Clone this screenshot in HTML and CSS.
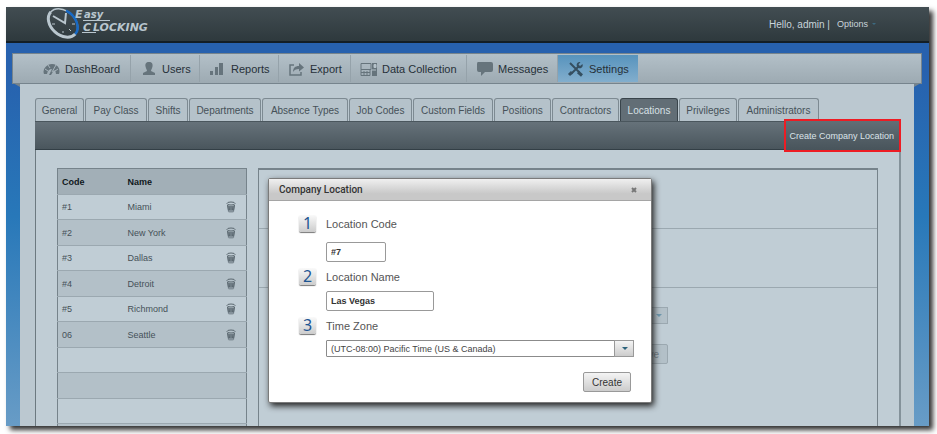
FILE: index.html
```html
<!DOCTYPE html>
<html lang="en">
<head>
    <meta charset="UTF-8">
    <meta name="viewport" content="width=device-width, initial-scale=1.0">
    <title>Easy Clocking - Locations</title>
    <link rel="stylesheet" href="styles.css">
</head>
<body>
    <div class="window">
        <header class="topbar">
            <svg class="logo" width="110" height="34" viewBox="0 0 110 34" role="img" aria-label="Easy Clocking">
                <g transform="rotate(42 16 16)" fill="none">
                    <ellipse cx="16" cy="16" rx="16.500" ry="12" stroke="#b9c6ce" stroke-width="1.500"/>
                    <path d="M-.5 16A16.500 12 0 0 0 32.500 16" stroke="#b9c6ce" stroke-width="3"/>
                    <path d="M10 4.800A16.500 12 0 0 1 32.500 16" stroke="#1769c4" stroke-width="2.500"/>
                </g>
                <path d="M6 9l12 7 1-10" fill="none" stroke="#b9c6ce" stroke-width="2"/>
                <path d="M5 17h3M25 17h3M16 26v-2M24 24l-2-2" stroke="#b9c6ce"/>
                <text class="logo-big" x="28" y="11">E</text>
                <text class="logo-small" x="37" y="11">asy</text>
                <text class="logo-big" x="36" y="24">C</text>
                <text class="logo-big" x="46" y="24">LOCKING</text>
                <path d="M36 13.500h27M35 25.500h14" stroke="#b9c6ce"/>
            </svg>
            <div class="account">
                <span class="hello">Hello, admin |</span>
                <button class="options" type="button">Options <i class="caret"></i></button>
            </div>
        </header>

        <nav class="mainnav">
            <a href="#dashboard">
                <svg width="17" height="16" viewBox="0 0 17 16"><path d="M1 13Q-.5 9 2.500 6 5 3 9 3q5 0 7 4.500 1 3 0 5.500h-3q0-3-2-4l-3 5H6l3-6q-4 0-5 5z" fill="#66747c"/><path d="M2 8l3 2M5 4l2 3M13 4l-4 7M15 8l-3 2" stroke="#a8b5bd"/></svg>
                DashBoard
            </a>
            <a href="#users">
                <svg width="17" height="16" viewBox="0 0 17 16"><path d="M9 1c3 0 4 2 3.500 4.500C12 8 11 8.500 11 10l4 2v2H3v-2l4-2c0-1.500-1-2-1.500-4.500C5 3 6 1 9 1z" fill="#66747c"/></svg>
                Users
            </a>
            <a href="#reports">
                <svg width="17" height="16" viewBox="0 0 17 16"><path d="M1 10h3v4H1zM6 6h3v8H6zM10 2h4v12h-4z" fill="#66747c"/></svg>
                Reports
            </a>
            <a href="#export">
                <svg width="17" height="16" viewBox="0 0 17 16"><path d="M6 4H2v10h11v-3" fill="none" stroke="#66747c" stroke-width="1.500"/><path d="M5 11c0-4 2-6 6-6V2l5 4.500-5 4V8c-3 0-5 1-6 3z" fill="#66747c"/></svg>
                Export
            </a>
            <a href="#data">
                <svg width="17" height="16" viewBox="0 0 17 16"><path d="M1 2.500h10v6H1zM1 8.500v6h9v-6M4 10v4M7 10v4M1 11.500h9" fill="none" stroke="#66747c"/><path d="M12 2h5v13h-5z" fill="#66747c"/><path d="M14 3.500h2v3h-2zM12 9h4" fill="#b5c2ca" stroke="#b5c2ca"/></svg>
                Data Collection
            </a>
            <a href="#messages">
                <svg width="17" height="16" viewBox="0 0 17 16"><path d="M2 1h13q2 0 2 2v6q0 2-2 2H9l-4 4v-4H3q-2 0-2-2V3q0-2 1-2z" fill="#66747c"/></svg>
                Messages
            </a>
            <a href="#settings" class="current">
                <svg width="17" height="16" viewBox="0 0 17 16"><path d="M3 2l9.500 9.500M11.500 5.500L4 13" stroke="#354f61" stroke-width="2"/><path d="M11 11l4 3.500" stroke="#354f61" stroke-width="3"/><path d="M15.500 3l-2.500 2-1.500-1.500 2-2.500c-3-.5-4.500 2-3.500 4.500l1.500 1.500c2.500 1 5-1 4-4z" fill="#354f61"/><path d="M5 11l-3 3" stroke="#354f61" stroke-width="3"/></svg>
                Settings
            </a>
        </nav>

        <main class="page">
            <nav class="tabs">
                <a href="#general">General</a>
                <a href="#payclass">Pay Class</a>
                <a href="#shifts">Shifts</a>
                <a href="#departments">Departments</a>
                <a href="#absence">Absence Types</a>
                <a href="#jobcodes">Job Codes</a>
                <a href="#fields">Custom Fields</a>
                <a href="#positions">Positions</a>
                <a href="#contractors">Contractors</a>
                <a href="#locations" class="current">Locations</a>
                <a href="#privileges">Privileges</a>
                <a href="#admins">Administrators</a>
            </nav>

            <div class="toolbar">
                <button class="create-location" type="button">Create Company Location</button>
            </div>

            <div class="workspace">
                <table class="locations">
                    <thead>
                        <tr><th class="code">Code</th><th>Name</th><th class="action"></th></tr>
                    </thead>
                    <tbody>
                        <tr><td>#1</td><td>Miami</td><td><button class="trash" type="button" aria-label="Delete Miami"><svg width="10" height="12"><use href="#trash"/></svg></button></td></tr>
                        <tr><td>#2</td><td>New York</td><td><button class="trash" type="button" aria-label="Delete New York"><svg width="10" height="12"><use href="#trash"/></svg></button></td></tr>
                        <tr><td>#3</td><td>Dallas</td><td><button class="trash" type="button" aria-label="Delete Dallas"><svg width="10" height="12"><use href="#trash"/></svg></button></td></tr>
                        <tr><td>#4</td><td>Detroit</td><td><button class="trash" type="button" aria-label="Delete Detroit"><svg width="10" height="12"><use href="#trash"/></svg></button></td></tr>
                        <tr><td>#5</td><td>Richmond</td><td><button class="trash" type="button" aria-label="Delete Richmond"><svg width="10" height="12"><use href="#trash"/></svg></button></td></tr>
                        <tr><td>06</td><td>Seattle</td><td><button class="trash" type="button" aria-label="Delete Seattle"><svg width="10" height="12"><use href="#trash"/></svg></button></td></tr>
                        <tr><td></td><td></td><td></td></tr>
                        <tr><td></td><td></td><td></td></tr>
                        <tr><td></td><td></td><td></td></tr>
                        <tr><td></td><td></td><td></td></tr>
                    </tbody>
                </table>

                <div class="details">
                    <div class="section"></div>
                    <div class="section"></div>
                    <form class="edit">
                        <div class="select">
                            <select aria-label="Zone" disabled><option></option></select>
                        </div>
                        <button class="btn" type="button" disabled>Save</button>
                    </form>

                    <section class="dialog" role="dialog" aria-labelledby="dialogTitle">
                        <div class="dialog-head">
                            <h2 id="dialogTitle">Company Location</h2>
                            <button class="close" type="button" aria-label="Close">
                                <svg width="6" height="6" viewBox="0 0 6 6"><path d="M1 1l4 4M5 1L1 5" stroke="#777" stroke-width="2"/></svg>
                            </button>
                        </div>
                        <form class="dialog-body">
                            <div class="field">
                                <span class="step">1</span>
                                <label for="code">Location Code</label>
                                <input class="short" type="text" id="code" value="#7">
                            </div>
                            <div class="field">
                                <span class="step">2</span>
                                <label for="name">Location Name</label>
                                <input type="text" id="name" value="Las Vegas">
                            </div>
                            <div class="field">
                                <span class="step">3</span>
                                <label for="zone">Time Zone</label>
                                <div class="select">
                                    <select id="zone"><option>(UTC-08:00) Pacific Time (US &amp; Canada)</option></select>
                                </div>
                            </div>
                            <button class="btn" type="submit">Create</button>
                        </form>
                    </section>
                </div>
            </div>
        </main>
    </div>

    <svg width="0" height="0" class="defs">
        <symbol id="trash" viewBox="0 0 10 12">
            <ellipse cx="5" cy="2.500" rx="4" ry="1.500" fill="none" stroke="#5b6870"/>
            <path d="M1 4l1 7q3 1 6 0l1-7q-4 1.500-8 0z" fill="#84919a"/>
            <path d="M3 5l.5 4M5 5v4M7 5l-.5 4M1.500 4l1 5.500M8.500 4l-1 5.500" stroke="#5b6870"/>
        </symbol>
    </svg>
</body>
</html>
```
FILE: styles.css
```css
* {
    box-sizing: border-box;
}

body {
    font-family: "Liberation Sans", Arial, sans-serif;
    font-size: 9px;
    margin: 0;
    padding: 7px 8px 8px 6px;
    background-color: #fff;
    display: flex;
    height: 100vh;
}

button, input, select {
    font-family: inherit;
    font-size: 9px;
}

button {
    cursor: pointer;
}

a {
    text-decoration: none;
}

.defs {
    position: absolute;
}

.window {
    flex: 1;
    display: flex;
    flex-direction: column;
    overflow: hidden;
    background: linear-gradient(#2761ae, #2761ae 15%, #2878b9 50%, #689cc6);
    box-shadow: 4px 4px 5px #333;
}

/* Top bar */
.topbar {
    display: flex;
    justify-content: space-between;
    align-items: center;
    flex-shrink: 0;
    height: 36px;
    padding: 0 53px 0 41px;
    background: linear-gradient(#424d52, #2e393d);
    border-bottom: 2px solid #131e26;
}

.logo {
    overflow: visible;
}

.logo text {
    fill: #b9c6ce;
    font-family: "DejaVu Sans", sans-serif;
    font-style: italic;
    font-weight: bold;
}

.logo-big {
    font-size: 11px;
}

.logo-small {
    font-size: 10px;
}

.account {
    display: flex;
    align-items: center;
    gap: 7px;
}

.hello {
    color: #c9d4da;
    font-size: 10px;
}

.options {
    display: flex;
    align-items: center;
    gap: 4px;
    padding: 0;
    border: none;
    background: none;
    color: #c9d4da;
}

.caret {
    border: 2px solid transparent;
    border-top-color: #3c6a80;
    border-bottom: none;
}

/* Main navigation */
.mainnav {
    position: relative;
    display: grid;
    grid-template-columns: 97px 69px 79px 72px 116px 91px 80px;
    flex-shrink: 0;
    height: 31px;
    margin: 10px 7px 0 6px;
    padding: 1px 21px;
    background: linear-gradient(#b3c0c8, #9daab2);
    border: 1px solid #76848d;
}

.mainnav a {
    display: flex;
    align-items: center;
    gap: 5px;
    padding-left: 9px;
    border-right: 1px solid #95a2aa;
    color: #263038;
    font-size: 11px;
    white-space: nowrap;
}

.mainnav .current {
    background: linear-gradient(#5793bd, #82aecd);
    border: none;
}

/* folded ribbon corners */
.mainnav::before, .mainnav::after {
    content: "";
    position: absolute;
    top: 100%;
    left: 0;
    border-top: 4px solid #76848d;
    border-left: 7px solid transparent;
}

.mainnav::after {
    left: auto;
    right: 0;
    border-left: none;
    border-right: 7px solid transparent;
}

/* Page */
.page {
    flex: 1;
    display: flex;
    flex-direction: column;
    min-height: 0;
    margin: 0 15px 0 14px;
    padding: 14px 13px 0 15px;
    background-color: #bbc8d0;
}

.tabs {
    display: grid;
    grid-template-columns: 49px 62px 40px 72px 86px 63px 80px 57px 67px 58px 58px 81px;
    gap: 1px;
    flex-shrink: 0;
    height: 23px;
}

.tabs a {
    display: flex;
    justify-content: center;
    align-items: center;
    background-color: #b5c2ca;
    border: 1px solid #7d8a92;
    border-bottom: none;
    border-radius: 3px 3px 0 0;
    color: #465158;
    font-size: 10px;
    white-space: nowrap;
}

.tabs .current {
    background-color: #626e76;
    border-color: #39444b;
    color: #d7e0e5;
}

.toolbar {
    display: flex;
    justify-content: flex-end;
    flex-shrink: 0;
    height: 29px;
    padding-right: 2px;
    background: linear-gradient(#66727a, #4a565d);
    border-top: 1px solid #4a565d;
    border-bottom: 1px solid #333f46;
}

.create-location {
    position: relative;
    margin: -1px 0;
    padding: 0 5px 0 3px;
    border: none;
    outline: 2px solid #ed1c24;
    background: linear-gradient(#626e76, #48545b);
    color: #dbe4e9;
    white-space: nowrap;
}

.workspace {
    flex: 1;
    display: flex;
    align-items: flex-start;
    gap: 11px;
    min-height: 0;
    padding: 18px 21px 0;
    background-color: #c0cdd5;
    border-left: 1px solid #6c7980;
    border-right: 2px solid #84929a;
}

/* Locations list */
.locations {
    width: 190px;
    flex-shrink: 0;
    table-layout: fixed;
    border-collapse: collapse;
    border: 1px solid #76838b;
    color: #465158;
}

.locations tr {
    height: 26px;
    border-bottom: 1px solid #9ba8b0;
}

.locations tbody tr:nth-child(odd) {
    height: 25px;
}

.locations tbody tr:nth-child(even) {
    background-color: #b3c0c8;
}

.locations thead {
    background-color: #a2afb7;
    color: #10181d;
}

.locations th, .locations td {
    padding: 0 4px;
    text-align: left;
}

.locations .code {
    width: 66px;
}

.locations .action {
    width: 25px;
}

.trash {
    display: block;
    padding: 0;
    border: none;
    background: none;
}

.trash svg {
    display: block;
}

/* Location details */
.details {
    position: relative;
    flex: 1;
    align-self: stretch;
    border: 1px solid #76838b;
    border-top-width: 2px;
    border-bottom: none;
}

.section {
    height: 59px;
    border-bottom: 1px solid #9ba8b0;
}

.edit {
    display: flex;
    flex-direction: column;
    align-items: flex-end;
    gap: 20px;
    width: 409px;
    padding-top: 19px;
}

.edit .select {
    width: 308px;
}

/* Form controls */
input {
    width: 108px;
    height: 20px;
    padding: 0 4px;
    border: 1px solid #999;
    border-radius: 2px;
    background-color: #fff;
    color: #333;
    font-weight: bold;
}

.short {
    width: 60px;
}

.select {
    position: relative;
    width: 100%;
    height: 17px;
}

.select select {
    display: block;
    width: 100%;
    height: 100%;
    padding: 0 20px 0 4px;
    appearance: none;
    border: 1px solid #8b8b8b;
    border-radius: 1px;
    background-color: #fff;
    color: #444;
}

.select::before {
    content: "";
    position: absolute;
    top: 0;
    right: 0;
    bottom: 0;
    width: 18px;
    border: 1px solid #999;
    background: linear-gradient(#f4f4f4, #ccc);
    pointer-events: none;
}

.select::after {
    content: "";
    position: absolute;
    top: 7px;
    right: 6px;
    border: 3px solid transparent;
    border-top-color: #2c637c;
    border-bottom: none;
    pointer-events: none;
}

.btn {
    height: 20px;
    padding: 0 8px;
    border: 1px solid #999;
    border-radius: 2px;
    background: linear-gradient(#f4f4f4, #ccc);
    color: #333;
    font-size: 10px;
}

/* controls dimmed behind the dialog */
.edit select, .edit .select::before, .edit .btn {
    background: #b3c0c8;
    border-color: #9ba8b0;
    color: #76838b;
}

.edit select:disabled {
    opacity: 0;
}

.edit .select::after {
    border-top-color: #6f98ae;
}

/* Dialog */
.dialog {
    position: absolute;
    top: 8px;
    left: 9px;
    width: 384px;
    background-color: #fff;
    border: 1px solid #7b7b7b;
    border-radius: 2px;
    box-shadow: 2px 3px 6px #222;
}

.dialog-head {
    display: flex;
    justify-content: space-between;
    align-items: center;
    height: 22px;
    padding: 0 14px 0 10px;
    background: linear-gradient(#f0f0f0, #c8c8c8 70%);
    border-bottom: 1px solid #a5a5a5;
}

.dialog-head h2 {
    margin: 0;
    color: #333;
    font-family: Roboto, sans-serif;
    font-size: 10px;
    font-weight: 500;
}

.close {
    display: flex;
    padding: 0;
    border: none;
    background: none;
}

.dialog-body {
    display: flex;
    flex-direction: column;
    gap: 6px;
    padding: 14px 17px 10px 30px;
}

.field {
    display: grid;
    grid-template-columns: 17px 1fr;
    gap: 6px 10px;
    align-items: center;
}

.field:first-child {
    row-gap: 10px;
}

.field input, .field .select {
    grid-column: 2;
}

.field label {
    color: #555;
    font-size: 11px;
}

.step {
    height: 17px;
    border-radius: 2px;
    background: linear-gradient(#fafafa, #ccc);
    box-shadow: 0 1px 1px #777;
    color: #1d5592;
    font-family: "Noto Sans", sans-serif;
    font-size: 16px;
    line-height: 17px;
    text-align: center;
}

.dialog-body .btn {
    align-self: flex-end;
    margin: 9px 3px 0 0;
}
```
